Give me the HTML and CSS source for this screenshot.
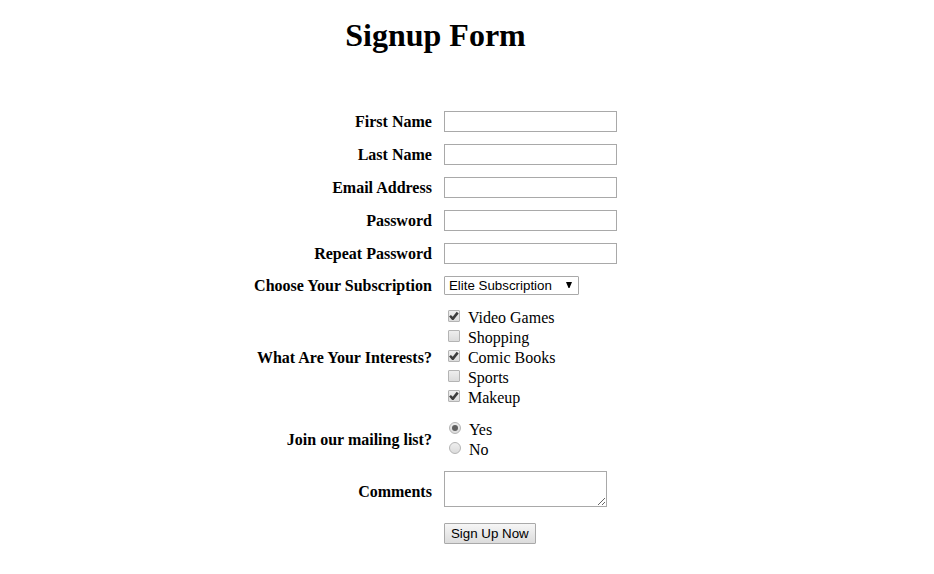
FILE: index.html
```html
<!DOCTYPE html>
<html lang="en">
<head>
<meta charset="utf-8">
<title>Signup Form</title>
<link rel="stylesheet" href="styles.css">
</head>
<body>
<main class="page">
  <h1 class="title">Signup Form</h1>
  <form class="form">
    <label class="label" for="first">First Name</label>
    <input class="field" id="first" type="text">
    <label class="label" for="last">Last Name</label>
    <input class="field" id="last" type="text">
    <label class="label" for="email">Email Address</label>
    <input class="field" id="email" type="email">
    <label class="label" for="password">Password</label>
    <input class="field" id="password" type="password">
    <label class="label" for="repeat">Repeat Password</label>
    <input class="field" id="repeat" type="password">
    <label class="label" for="subscription">Choose Your Subscription</label>
    <div class="select-wrap">
      <select class="select" id="subscription"><option>Elite Subscription</option></select>
      <svg class="arrow" viewBox="0 0 6 6" aria-hidden="true"><path d="M0 0h6L3.500 6h-1z"/></svg>
    </div>
    <span class="label" id="interests">What Are Your Interests?</span>
    <div class="options" role="group" aria-labelledby="interests">
      <label class="option"><input class="check" type="checkbox" checked>Video Games</label>
      <label class="option"><input class="check" type="checkbox">Shopping</label>
      <label class="option"><input class="check" type="checkbox" checked>Comic Books</label>
      <label class="option"><input class="check" type="checkbox">Sports</label>
      <label class="option"><input class="check" type="checkbox" checked>Makeup</label>
    </div>
    <span class="label" id="mailing">Join our mailing list?</span>
    <div class="options" role="radiogroup" aria-labelledby="mailing">
      <label class="option"><input class="radio" type="radio" name="mailing" checked>Yes</label>
      <label class="option"><input class="radio" type="radio" name="mailing">No</label>
    </div>
    <label class="label" for="comments">Comments</label>
    <textarea class="comments" id="comments"></textarea>
    <button class="submit" type="submit">Sign Up Now</button>
  </form>
</main>
</body>
</html>
```
FILE: styles.css
```css
* { box-sizing: border-box; }

body {
  margin: 0;
  background: #fff;
  color: #000;
  font-family: "Liberation Serif", "Times New Roman", serif;
  font-size: 16px;
  line-height: 18px;
}

.page { padding: 17px 63px 24px 0; }

.title {
  margin: 0 0 58px;
  font-size: 32px;
  line-height: 36px;
  text-align: center;
}

.form {
  display: grid;
  grid-template-columns: auto 173px;
  justify-content: center;
  justify-items: start;
  align-items: center;
  gap: 12px;
}

.label {
  justify-self: end;
  font-weight: bold;
  line-height: 17px;
}

.field, .select, .comments, .submit {
  margin: 0;
  border: 1px solid #a9a9a9;
  border-radius: 0;
  background: #fff;
  color: #000;
  font-family: "Liberation Sans", Arial, sans-serif;
}

.field {
  width: 173px;
  height: 21px;
  padding: 1px;
}

.select-wrap { position: relative; display: flex; }

.select {
  appearance: none;
  width: 135px;
  height: 19px;
  padding: 0 4px;
  border-radius: 1px;
}

.arrow {
  position: absolute;
  top: 6px;
  right: 7px;
  width: 6px;
  height: 6px;
  pointer-events: none;
}

.options { display: flex; flex-direction: column; }

.option {
  display: flex;
  align-items: flex-start;
  padding-top: 2px;
}

.check, .radio {
  appearance: none;
  display: grid;
  place-items: center;
  width: 12px;
  height: 12px;
  border: 1px solid #b4b4b4;
  background: linear-gradient(#eee, #dcdcdc);
}

.check { margin: 1px 8px 0 4px; border-radius: 1px; }

.radio { margin: 1px 8px 0 5px; border-radius: 50%; }

.check:checked::before {
  content: "";
  width: 10px;
  height: 10px;
  background: #3c3c3c;
  clip-path: polygon(2% 56%, 20% 40%, 38% 58%, 78% 8%, 98% 24%, 46% 90%, 32% 90%);
}

.radio:checked::before {
  content: "";
  width: 6px;
  height: 6px;
  border-radius: 50%;
  background: #606060;
}

.comments {
  width: 163px;
  height: 36px;
  margin-bottom: 4px;
  padding: 2px;
}

.submit {
  grid-column: 2;
  height: 21px;
  padding: 0 6px;
  border-radius: 1px;
  background: linear-gradient(#f6f6f6, #dcdcdc);
}
```
